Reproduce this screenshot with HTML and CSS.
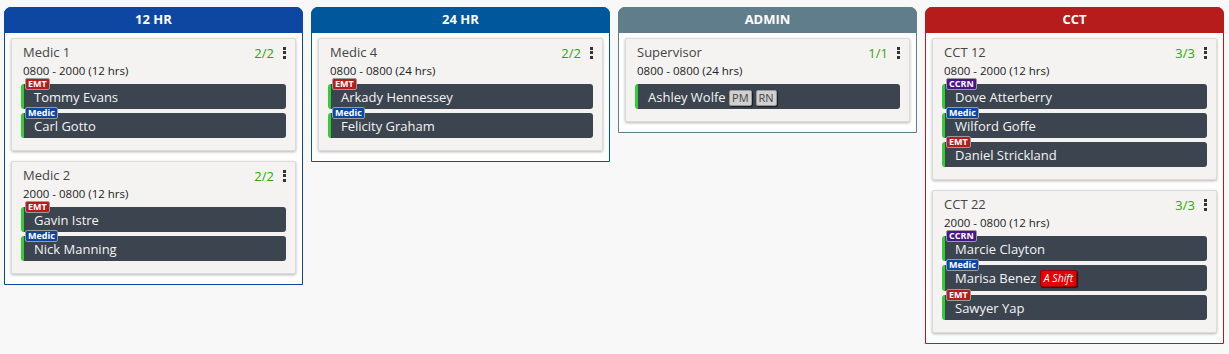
FILE: index.html
```html
<!DOCTYPE html>
<html lang="en">

<head>
    <meta charset="UTF-8">
    <title>Shift Board</title>
    <link rel="stylesheet" href="styles.css">
</head>

<body>
    <div class="board">

        <div class="column col-12hr">
            <div class="column-header">12 HR</div>
            <div class="column-body">
                <div class="unit">
                    <div class="unit-head">
                        <span class="unit-name">Medic 1</span>
                        <span class="unit-count">2/2</span>
                        <span class="kebab"><i></i><i></i><i></i></span>
                    </div>
                    <div class="unit-time">0800 - 2000 (12 hrs)</div>
                    <div class="staff"><span class="cert cert-emt">EMT</span>Tommy Evans</div>
                    <div class="staff"><span class="cert cert-medic">Medic</span>Carl Gotto</div>
                </div>
                <div class="unit">
                    <div class="unit-head">
                        <span class="unit-name">Medic 2</span>
                        <span class="unit-count">2/2</span>
                        <span class="kebab"><i></i><i></i><i></i></span>
                    </div>
                    <div class="unit-time">2000 - 0800 (12 hrs)</div>
                    <div class="staff"><span class="cert cert-emt">EMT</span>Gavin Istre</div>
                    <div class="staff"><span class="cert cert-medic">Medic</span>Nick Manning</div>
                </div>
            </div>
        </div>

        <div class="column col-24hr">
            <div class="column-header">24 HR</div>
            <div class="column-body">
                <div class="unit">
                    <div class="unit-head">
                        <span class="unit-name">Medic 4</span>
                        <span class="unit-count">2/2</span>
                        <span class="kebab"><i></i><i></i><i></i></span>
                    </div>
                    <div class="unit-time">0800 - 0800 (24 hrs)</div>
                    <div class="staff"><span class="cert cert-emt">EMT</span>Arkady Hennessey</div>
                    <div class="staff"><span class="cert cert-medic">Medic</span>Felicity Graham</div>
                </div>
            </div>
        </div>

        <div class="column col-admin">
            <div class="column-header">ADMIN</div>
            <div class="column-body">
                <div class="unit">
                    <div class="unit-head">
                        <span class="unit-name">Supervisor</span>
                        <span class="unit-count">1/1</span>
                        <span class="kebab"><i></i><i></i><i></i></span>
                    </div>
                    <div class="unit-time">0800 - 0800 (24 hrs)</div>
                    <div class="staff">Ashley Wolfe <span class="tag">PM</span><span class="tag">RN</span></div>
                </div>
            </div>
        </div>

        <div class="column col-cct">
            <div class="column-header">CCT</div>
            <div class="column-body">
                <div class="unit">
                    <div class="unit-head">
                        <span class="unit-name">CCT 12</span>
                        <span class="unit-count">3/3</span>
                        <span class="kebab"><i></i><i></i><i></i></span>
                    </div>
                    <div class="unit-time">0800 - 2000 (12 hrs)</div>
                    <div class="staff"><span class="cert cert-ccrn">CCRN</span>Dove Atterberry</div>
                    <div class="staff"><span class="cert cert-medic">Medic</span>Wilford Goffe</div>
                    <div class="staff"><span class="cert cert-emt">EMT</span>Daniel Strickland</div>
                </div>
                <div class="unit">
                    <div class="unit-head">
                        <span class="unit-name">CCT 22</span>
                        <span class="unit-count">3/3</span>
                        <span class="kebab"><i></i><i></i><i></i></span>
                    </div>
                    <div class="unit-time">2000 - 0800 (12 hrs)</div>
                    <div class="staff"><span class="cert cert-ccrn">CCRN</span>Marcie Clayton</div>
                    <div class="staff staff-tall"><span class="cert cert-medic">Medic</span>Marisa Benez <span class="shift-tag">A Shift</span></div>
                    <div class="staff"><span class="cert cert-emt">EMT</span>Sawyer Yap</div>
                </div>
            </div>
        </div>

    </div>
</body>

</html>
```

FILE: styles.css
```css
body {
    margin: 0;
    background-color: #f8f8f8;
    font-family: "Open Sans", Arial, sans-serif;
    color: #444;
}

.board {
    display: flex;
    align-items: flex-start;
    gap: 8px;
    padding: 7px 4px;
}

.column {
    width: 299px;
    box-sizing: border-box;
    background-color: #fff;
    border: 1px solid #0d47a1;
    border-radius: 7px 7px 0 0;
}

.column-header {
    height: 26px;
    line-height: 25px;
    margin: -1px -1px 0 -1px;
    border-radius: 7px 7px 0 0;
    background-color: #0d47a1;
    color: #fff;
    font-size: 13px;
    font-weight: bold;
    text-align: center;
}

.col-24hr,
.col-24hr .column-header {
    border-color: #01579b;
    background-color: #01579b;
}

.col-admin,
.col-admin .column-header {
    border-color: #607d8b;
    background-color: #607d8b;
}

.col-cct,
.col-cct .column-header {
    border-color: #b71c1c;
    background-color: #b71c1c;
}

.col-24hr,
.col-admin,
.col-cct {
    background-color: #fff;
}

.column-body {
    padding: 5px 6px 0 6px;
}

.unit {
    background-color: #f4f3f2;
    border: 1px solid #dcdcdc;
    border-radius: 2px;
    box-shadow: 0 1px 3px rgba(0, 0, 0, 0.3);
    padding: 3px 9px 12px 9px;
    margin-bottom: 10px;
}

.unit-head {
    display: flex;
    align-items: center;
    height: 19px;
    padding-left: 2px;
}

.unit-name {
    flex-grow: 1;
    font-size: 13px;
    color: #444;
}

.unit-count {
    font-size: 13px;
    color: #33a500;
    margin-top: 3px;
}

.kebab {
    display: flex;
    flex-direction: column;
    gap: 1.5px;
    margin: 2px 0 0 9px;
}

.kebab i {
    display: block;
    width: 3px;
    height: 3px;
    background-color: #333;
}

.unit-time {
    font-size: 11.5px;
    color: #222;
    margin-top: 3px;
    padding-left: 2px;
    line-height: 14px;
}

.staff {
    position: relative;
    height: 25px;
    line-height: 26px;
    margin-top: 4px;
    padding-left: 10px;
    background-color: #3b444f;
    border-left: 3px solid #33cc33;
    border-radius: 3px;
    color: #f4f4f4;
    font-size: 13px;
}

.staff-tall {
    height: 26px;
}

.unit-time + .staff {
    margin-top: 6px;
}

.cert {
    position: absolute;
    left: 1px;
    top: -6px;
    height: 10px;
    line-height: 10px;
    padding: 0 2px;
    border: 1px solid #9a9a9a;
    border-radius: 2px;
    color: #fff;
    font-size: 9px;
    font-weight: bold;
}

.cert-emt {
    background-color: #b71c1c;
}

.cert-medic {
    background-color: #0d47a1;
}

.cert-ccrn {
    background-color: #4a148c;
}

.tag {
    display: inline-block;
    vertical-align: middle;
    height: 14px;
    line-height: 14px;
    margin: -2px 4px 0 0;
    padding: 0 2px;
    background-color: #d0d0d0;
    border: 1px solid #999;
    border-radius: 2px;
    box-shadow: 1px 1px 1px rgba(0, 0, 0, 0.6);
    color: #444;
    font-size: 11px;
}

.shift-tag {
    display: inline-block;
    vertical-align: middle;
    height: 15px;
    line-height: 15px;
    margin-top: -2px;
    padding: 0 3px;
    background-color: #e60000;
    border: 1px solid #900;
    border-radius: 2px;
    box-shadow: 1px 1px 1px rgba(0, 0, 0, 0.6);
    color: #fff;
    font-size: 10.5px;
    font-style: italic;
}
```
